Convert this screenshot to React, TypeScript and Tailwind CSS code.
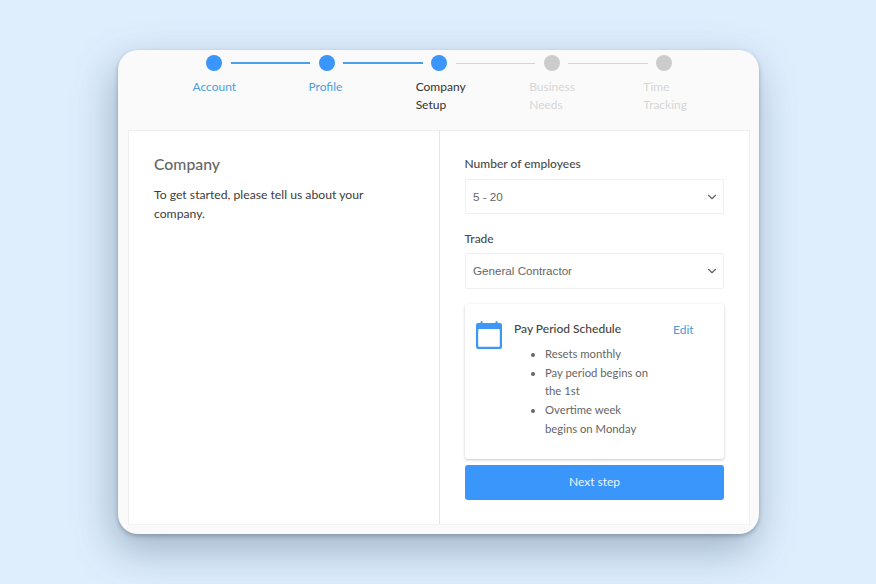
import React from 'react';
import { ChevronDown } from 'lucide-react';

const steps = [
  { label: 'Account', state: 'done', nudge: '' },
  { label: 'Profile', state: 'done', nudge: 'mr-[3px]' },
  { label: 'Company Setup', state: 'current', nudge: 'ml-[2px]' },
  { label: 'Business Needs', state: 'todo', nudge: '' },
  { label: 'Time Tracking', state: 'todo', nudge: 'ml-[1px]' },
];

const bullets = ['Resets monthly', 'Pay period begins on the 1st', 'Overtime week begins on Monday'];

const CalendarIcon = () => (
  <svg width="26" height="28" viewBox="0 0 26 28" fill="none">
    <rect x="4.5" y="0" width="2" height="4" rx="1" fill="#3f97f5" />
    <rect x="19.5" y="0" width="2" height="4" rx="1" fill="#3f97f5" />
    <path d="M2 2h22a2 2 0 0 1 2 2v22a2 2 0 0 1-2 2H2a2 2 0 0 1-2-2V4a2 2 0 0 1 2-2z" fill="#3f97f5" />
    <rect x="2.2" y="8" width="21.6" height="17.8" rx="0.8" fill="#ffffff" />
  </svg>
);

const SelectBox = ({ value, className }: { value: string; className: string }) => (
  <div className={`flex items-center justify-between border border-[#f0f0f0] bg-white pl-[7px] pr-1 rounded-[2px] ${className}`}>
    <span className="font-['Liberation_Sans',sans-serif] text-[11.65px] text-[#666666]">{value}</span>
    <ChevronDown size={14} strokeWidth={2} className="text-[#666666]" />
  </div>
);

export default function App() {
  return (
    <div className="h-[584px] w-[876px] overflow-hidden bg-[#deeefd] pt-[50px] pl-[118px] font-['Lato',sans-serif]">
      <div className="flex h-[484px] w-[641px] flex-col rounded-[20px] bg-[#fafafa] shadow-[-4px_16px_42px_rgba(70,95,125,0.42),0_2px_4px_rgba(50,60,75,0.35)]">
        <div className="h-[80px] shrink-0">
          <div className="flex items-center pl-[88px] pt-[5px]">
            {steps.map((s, i) => (
              <React.Fragment key={s.label}>
                <div className={`h-4 w-4 shrink-0 rounded-full ${s.state === 'todo' ? 'bg-[#cccccc]' : 'bg-[#3a96fb]'}`} />
                {i < 4 && (
                  <div className={`mx-[8.5px] w-[79.5px] ${i < 2 ? 'h-[2px] bg-[#4a9fe8]' : 'h-px bg-[#d4d4d4]'}`} />
                )}
              </React.Fragment>
            ))}
          </div>
          <div className="mt-[7px] grid w-[563px] grid-cols-5 pl-[40px] box-content">
            {steps.map(s => (
              <div key={s.label} className="flex justify-center">
                <span
                  className={`w-min text-[12px] leading-[18px] ${s.nudge} ${
                    s.state === 'done' ? 'text-[#4a9fe0]' : s.state === 'current' ? 'text-[#333333]' : 'text-[#d6d6d6]'
                  }`}
                >
                  {s.label}
                </span>
              </div>
            ))}
          </div>
        </div>

        <div className="mx-[10px] flex h-[395px] w-[622px] border border-[#efefef] border-b-[#f4f4f4] bg-white">
          <div className="w-[311px] shrink-0 border-r border-[#e4e4e4] px-[25px] pt-[23px]">
            <h2 className="text-[15.8px] leading-[20px] font-medium text-[#666666]">Company</h2>
            <p className="mt-[11px] w-[230px] text-[12.2px] leading-[19px] text-[#3c3c3c]">
              To get started, please tell us about your company.
            </p>
          </div>

          <div className="flex-1 px-[25px] pt-[25px]">
            <div className="-ml-[0.5px] text-[12px] leading-[16px] font-medium text-[#4a4a4a]">Number of employees</div>
            <SelectBox value="5 - 20" className="mt-[7px] h-[35px] pt-px" />
            <div className="-ml-[0.5px] mt-[17px] text-[12px] leading-[16px] font-medium text-[#4a4a4a]">Trade</div>
            <SelectBox value="General Contractor" className="mt-[6px] h-[36px]" />

            <div className="mt-[15px] flex h-[155px] rounded-[3px] bg-white pl-[11px] pt-[17px] shadow-[0_1px_3px_rgba(0,0,0,0.22)]">
              <CalendarIcon />
              <div className="ml-[12px] w-[140px]">
                <div className="text-[12px] leading-[16px] font-medium text-[#444444]">Pay Period Schedule</div>
                <ul className="mt-[8px] list-disc pl-[31px] text-[11.3px] leading-[18.7px] text-[#666666]">
                  {bullets.map(b => (
                    <li key={b}>{b}</li>
                  ))}
                </ul>
              </div>
              <a className="ml-[19px] mt-px text-[12px] leading-[16px] text-[#4a9bd8]">Edit</a>
            </div>

            <button className="mt-[6px] h-[35px] w-full rounded-[3px] bg-[#3a96fb] pb-px text-[12px] text-[#eaf4ff]">
              Next step
            </button>
          </div>
        </div>
      </div>
    </div>
  );
}
